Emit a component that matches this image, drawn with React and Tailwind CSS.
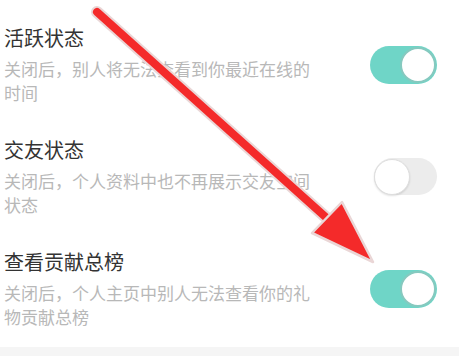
const ROWS = [
  {
    id: 'active',
    title: '活跃状态',
    desc: '关闭后，别人将无法查看到你最近在线的时间',
    on: true,
  },
  {
    id: 'friend',
    title: '交友状态',
    desc: '关闭后，个人资料中也不再展示交友空间状态',
    on: false,
  },
  {
    id: 'rank',
    title: '查看贡献总榜',
    desc: '关闭后，个人主页中别人无法查看你的礼物贡献总榜',
    on: true,
  },
];

function Toggle({ on }) {
  if (on) {
    return (
      <div className="w-[67px] h-[38px] rounded-full bg-[#6fd5c7] flex items-center justify-end shrink-0">
        <div className="w-[36px] h-[36px] rounded-full bg-white border-2 border-[#86c9bf] mr-[1px]" />
      </div>
    );
  }
  return (
    <div className="w-[63px] h-[37px] rounded-full bg-[#ececec] flex items-center justify-start shrink-0">
      <div className="w-[36px] h-[36px] rounded-full bg-white border border-[#dedede] shadow-[0_1px_2px_rgba(0,0,0,0.12)]" />
    </div>
  );
}

export default function App() {
  return (
    <div
      className="relative w-[459px] h-[356px] bg-white overflow-hidden flex flex-col"
      style={{ fontFamily: '"Noto Sans CJK SC", "Noto Sans", sans-serif' }}
    >
      <div className="flex flex-col gap-[31px] pt-[24px] pb-[18px] pl-[4px] pr-[22px]">
        {ROWS.map((row) => (
          <div key={row.id} className="flex items-center justify-between">
            <div className="flex flex-col">
              <p className="text-[20px] leading-[28px] text-[#333333]">{row.title}</p>
              <p className="mt-[5px] w-[316px] text-[17px] leading-[24px] text-[#b8b8b8]">
                {row.desc}
              </p>
            </div>
            <Toggle on={row.on} />
          </div>
        ))}
      </div>
      <div className="flex-1 bg-[#f5f5f5]" />

      <svg
        className="absolute inset-0 pointer-events-none"
        width="459"
        height="356"
        viewBox="0 0 459 356"
      >
        <line x1="97" y1="12" x2="330" y2="221" stroke="#ead6d6" strokeWidth="12" strokeLinecap="round" />
        <line x1="97" y1="12" x2="330" y2="221" stroke="#f42a2a" strokeWidth="8" strokeLinecap="round" />
        <polygon
          points="373,262 342,202 312,233"
          fill="#f42a2a"
          stroke="#ead6d6"
          strokeWidth="2.5"
          strokeLinejoin="round"
        />
      </svg>
    </div>
  );
}
